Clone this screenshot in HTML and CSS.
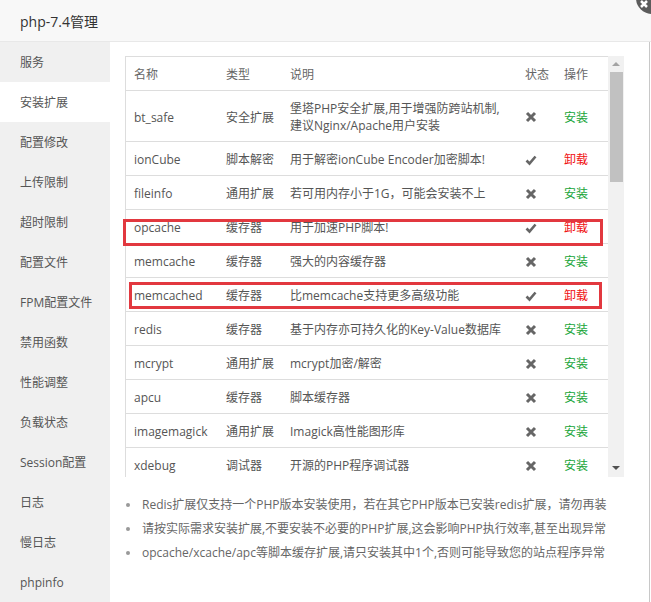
FILE: index.html
```html
<!DOCTYPE html>
<html lang="zh-CN">
<head>
<meta charset="utf-8">
<title>php-7.4管理</title>
<link rel="stylesheet" href="styles.css">
</head>
<body>
<div class="window">
  <div class="title">php-7.4管理</div>
  <div class="body">
    <ul class="side">
      <li>服务</li>
      <li class="active">安装扩展</li>
      <li>配置修改</li>
      <li>上传限制</li>
      <li>超时限制</li>
      <li>配置文件</li>
      <li>FPM配置文件</li>
      <li>禁用函数</li>
      <li>性能调整</li>
      <li>负载状态</li>
      <li>Session配置</li>
      <li>日志</li>
      <li>慢日志</li>
      <li>phpinfo</li>
    </ul>
    <div class="main">
      <div class="tablebox">
        <div class="tablewrap">
          <table>
            <colgroup><col class="c1"><col class="c2"><col class="c3"><col class="c4"><col class="c5"></colgroup>
            <thead>
              <tr><th>名称</th><th>类型</th><th>说明</th><th>状态</th><th>操作</th></tr>
            </thead>
            <tbody>
              <tr><td>bt_safe</td><td>安全扩展</td><td>堡塔PHP安全扩展,用于增强防跨站机制,<br>建议Nginx/Apache用户安装</td><td><svg class="ico" viewBox="0 0 12 12"><path d="M2 2 L10 10 M10 2 L2 10" /></svg></td><td class="ins">安装</td></tr>
              <tr><td>ionCube</td><td>脚本解密</td><td>用于解密ionCube Encoder加密脚本!</td><td><svg class="ico ok" viewBox="0 0 12 12"><path d="M1.5 6.5 L4.5 9.5 L10.5 2.5" /></svg></td><td class="uni">卸载</td></tr>
              <tr><td>fileinfo</td><td>通用扩展</td><td>若可用内存小于1G，可能会安装不上</td><td><svg class="ico" viewBox="0 0 12 12"><path d="M2 2 L10 10 M10 2 L2 10" /></svg></td><td class="ins">安装</td></tr>
              <tr><td>opcache</td><td>缓存器</td><td>用于加速PHP脚本!</td><td><svg class="ico ok" viewBox="0 0 12 12"><path d="M1.5 6.5 L4.5 9.5 L10.5 2.5" /></svg></td><td class="uni">卸载</td></tr>
              <tr><td>memcache</td><td>缓存器</td><td>强大的内容缓存器</td><td><svg class="ico" viewBox="0 0 12 12"><path d="M2 2 L10 10 M10 2 L2 10" /></svg></td><td class="ins">安装</td></tr>
              <tr><td>memcached</td><td>缓存器</td><td>比memcache支持更多高级功能</td><td><svg class="ico ok" viewBox="0 0 12 12"><path d="M1.5 6.5 L4.5 9.5 L10.5 2.5" /></svg></td><td class="uni">卸载</td></tr>
              <tr><td>redis</td><td>缓存器</td><td>基于内存亦可持久化的Key-Value数据库</td><td><svg class="ico" viewBox="0 0 12 12"><path d="M2 2 L10 10 M10 2 L2 10" /></svg></td><td class="ins">安装</td></tr>
              <tr><td>mcrypt</td><td>通用扩展</td><td>mcrypt加密/解密</td><td><svg class="ico" viewBox="0 0 12 12"><path d="M2 2 L10 10 M10 2 L2 10" /></svg></td><td class="ins">安装</td></tr>
              <tr><td>apcu</td><td>缓存器</td><td>脚本缓存器</td><td><svg class="ico" viewBox="0 0 12 12"><path d="M2 2 L10 10 M10 2 L2 10" /></svg></td><td class="ins">安装</td></tr>
              <tr><td>imagemagick</td><td>通用扩展</td><td>Imagick高性能图形库</td><td><svg class="ico" viewBox="0 0 12 12"><path d="M2 2 L10 10 M10 2 L2 10" /></svg></td><td class="ins">安装</td></tr>
              <tr><td>xdebug</td><td>调试器</td><td>开源的PHP程序调试器</td><td><svg class="ico" viewBox="0 0 12 12"><path d="M2 2 L10 10 M10 2 L2 10" /></svg></td><td class="ins">安装</td></tr>
            </tbody>
          </table>
        </div>
        <div class="scrollbar">
          <div class="arrow up"></div>
          <div class="thumb"></div>
          <div class="track"></div>
          <div class="arrow down"></div>
        </div>
      </div>
      <ul class="notes">
        <li>Redis扩展仅支持一个PHP版本安装使用，若在其它PHP版本已安装redis扩展，请勿再装</li>
        <li>请按实际需求安装扩展,不要安装不必要的PHP扩展,这会影响PHP执行效率,甚至出现异常</li>
        <li>opcache/xcache/apc等脚本缓存扩展,请只安装其中1个,否则可能导致您的站点程序异常</li>
      </ul>
    </div>
  </div>
  <div class="mark mark-opcache"></div>
  <div class="mark mark-memcached"></div>
  <div class="close"><svg viewBox="0 0 32 32"><path d="M5 19 L11 25 M11 19 L5 25" /></svg></div>
</div>
</body>
</html>
```

FILE: styles.css
```css
* { box-sizing: border-box; }
html, body { margin: 0; padding: 0; background: #fff; }
body {
  font-family: "Open Sans", "Noto Sans CJK SC", sans-serif;
  font-size: 12px;
  color: #555;
}
.window {
  position: relative;
  width: 651px;
  height: 602px;
  overflow: hidden;
  background: #fff;
}
.title {
  height: 42px;
  line-height: 43px;
  padding-left: 20px;
  font-size: 14px;
  color: #333;
  background: #f8f8f8;
  border-bottom: 1px solid #e8e8e8;
}
.body {
  display: flex;
  height: 560px;
}
.side {
  list-style: none;
  margin: 0;
  padding: 0;
  width: 110px;
  flex: none;
  background: #f0f0f0;
}
.side li {
  height: 40px;
  line-height: 41px;
  padding-left: 20px;
  color: #555;
  font-size: 12px;
}
.side li.active { background: #fff; }
.main {
  width: 540px;
  flex: none;
  padding: 14px 25px 0 15px;
  border-right: 1px solid #c8c8c8;
}
.tablebox {
  display: flex;
  height: 421px;
}
.tablewrap {
  width: 483px;
  overflow: hidden;
  border-top: 1px solid #ddd;
  border-left: 1px solid #ddd;
}
table {
  width: 482px;
  table-layout: fixed;
  border-collapse: collapse;
}
col.c1 { width: 92px; }
col.c2 { width: 64px; }
col.c3 { width: 235px; }
col.c4 { width: 39px; }
col.c5 { width: 52px; }
th, td {
  text-align: left;
  font-weight: normal;
  padding: 9px 0 7px 8px;
  line-height: 17px;
  border-bottom: 1px solid #ddd;
  white-space: nowrap;
  vertical-align: middle;
}
th { color: #666; }
td { color: #555; }
.ico {
  display: block;
  width: 12px;
  height: 12px;
  fill: none;
  stroke: #666;
  stroke-width: 3;
  stroke-linecap: butt;
}
.ico.ok { stroke-width: 2.6; }
.ins { color: #20a53a; }
.uni { color: #f01010; }
.scrollbar {
  width: 16px;
  flex: none;
  background: #f1f1f1;
  display: flex;
  flex-direction: column;
  align-items: center;
}
.arrow {
  width: 0;
  height: 0;
  border-left: 4px solid transparent;
  border-right: 4px solid transparent;
  flex: none;
}
.arrow.up {
  margin-top: 6px;
  border-bottom: 4px solid #a3a3a3;
}
.arrow.down {
  margin-bottom: 7px;
  border-top: 4px solid #505050;
}
.thumb {
  width: 13px;
  height: 110px;
  margin-top: 6px;
  background: #c1c1c1;
  flex: none;
}
.track { flex: 1; }
.notes {
  list-style: none;
  margin: 16px 0 0 0;
  padding: 0;
}
.notes li {
  position: relative;
  padding-left: 17px;
  line-height: 24px;
  color: #666;
  white-space: nowrap;
}
.notes li::before {
  content: "";
  position: absolute;
  left: 1px;
  top: 10px;
  width: 4px;
  height: 4px;
  border-radius: 50%;
  background: #999;
}
.mark {
  position: absolute;
  border: 3px solid #e2383f;
}
.mark-opcache {
  left: 123px;
  top: 219px;
  width: 480px;
  height: 27px;
}
.mark-memcached {
  left: 129px;
  top: 282px;
  width: 473px;
  height: 27px;
}
.close {
  position: absolute;
  right: -17px;
  top: -18px;
  width: 32px;
  height: 32px;
  border-radius: 50%;
  background: #5c5c5c;
}
.close svg {
  width: 32px;
  height: 32px;
  fill: none;
  stroke: #fff;
  stroke-width: 2.5;
}
```
